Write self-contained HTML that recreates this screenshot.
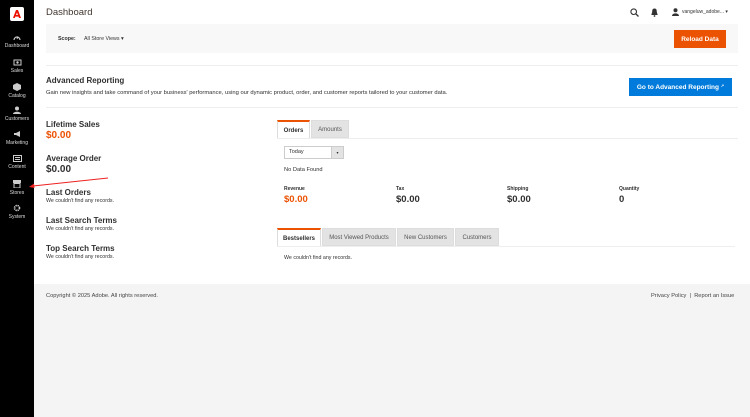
<!DOCTYPE html>
<html><head><meta charset="utf-8"><style>
*{margin:0;padding:0;box-sizing:border-box}
body{width:750px;height:417px;overflow:hidden;background:#fff;font-family:"Liberation Sans",sans-serif;color:#303030;position:relative}
.a{position:absolute;white-space:nowrap}
#side{left:0;top:0;width:34px;height:417px;background:#000}
.nav{width:34px;text-align:center;color:#ddd;font-size:5px}
.nav svg{display:block;margin:0 auto 2px}
.h{font-weight:bold;font-size:8px;color:#303030}
.s{font-size:5.3px;color:#303030}
.tab{position:absolute;height:18px;font-size:6px;line-height:18px;text-align:center;background:#e3e3e3;border:1px solid #ddd;color:#555}
.tab.on{background:#fff;border-top:2px solid #eb5202;border-bottom:none;font-weight:bold;color:#303030}
.btn{position:absolute;color:#fff;font-size:6.5px;font-weight:bold;display:flex;align-items:center;justify-content:center}
</style></head><body>
<div class="a" id="side"></div>
<div class="a" style="left:10px;top:7px;width:14px;height:14px;background:#fff;border-radius:2px"></div>
<svg class="a" style="left:12px;top:9px" width="10" height="10" viewBox="0 0 10 10"><path d="M1 9L4 1h2l3 8H7L5 3.5 4 6h2l.7 1.6H3.3L2.8 9z" fill="#eb1000"/></svg>
<div class="a nav" style="top:34px"><svg width="8" height="7" viewBox="0 0 8 7"><path d="M1 6A3 3 0 1 1 7 6" stroke="#ccc" fill="none" stroke-width="1.2"/><path d="M4 5L5 2.5" stroke="#ccc"/></svg>Dashboard</div>
<div class="a nav" style="top:59px"><svg width="9" height="7" viewBox="0 0 9 7"><rect x="1" y="1" width="7" height="5" fill="none" stroke="#ccc"/><circle cx="4.5" cy="3.5" r="1.2" fill="#ccc"/></svg>Sales</div>
<div class="a nav" style="top:83px"><svg width="8" height="8" viewBox="0 0 8 8"><path d="M4 0L8 2v4L4 8 0 6V2z" fill="#ccc"/></svg>Catalog</div>
<div class="a nav" style="top:106px"><svg width="9" height="8" viewBox="0 0 9 8"><circle cx="4" cy="2.5" r="2" fill="#ccc"/><path d="M0 8c0-3 8-3 8 0z" fill="#ccc"/></svg>Customers</div>
<div class="a nav" style="top:131px"><svg width="8" height="7" viewBox="0 0 8 7"><path d="M1 2h2l4-2v6L3 4H1z" fill="#ccc"/></svg>Marketing</div>
<div class="a nav" style="top:155px"><svg width="9" height="7" viewBox="0 0 9 7"><rect x="0.5" y="0.5" width="8" height="6" fill="none" stroke="#ccc"/><rect x="2" y="2" width="5" height="1" fill="#ccc"/><rect x="2" y="4" width="5" height="1" fill="#ccc"/></svg>Content</div>
<div class="a nav" style="top:180px"><svg width="8" height="8" viewBox="0 0 8 8"><rect x="0" y="0" width="8" height="3" fill="#ccc"/><rect x="1" y="3.5" width="6" height="4.5" fill="none" stroke="#ccc"/></svg>Stores</div>
<div class="a nav" style="top:204px"><svg width="8" height="8" viewBox="0 0 8 8"><circle cx="4" cy="4" r="2.5" fill="none" stroke="#ccc" stroke-width="1.6" stroke-dasharray="1.3 0.7"/></svg>System</div>
<svg class="a" style="left:28px;top:176px" width="84" height="14" viewBox="0 0 84 14"><path d="M80 2L5 10" stroke="#e22" stroke-width="1"/><path d="M1 11L6 7.5 6.5 12z" fill="#e22"/></svg>

<div class="a" style="left:46px;top:7px;font-size:9.5px;color:#41362f">Dashboard</div>
<svg class="a" style="left:630px;top:8px" width="9" height="9" viewBox="0 0 9 9"><circle cx="3.7" cy="3.7" r="2.8" fill="none" stroke="#333" stroke-width="1.1"/><path d="M5.8 5.8L8.5 8.5" stroke="#333" stroke-width="1.3"/></svg>
<svg class="a" style="left:651px;top:8px" width="7" height="9" viewBox="0 0 7 9"><path d="M3.5 0.5C1.5 0.5 1.2 2 1.2 4L0.3 7h6.4L5.8 4C5.8 2 5.5 0.5 3.5 0.5z" fill="#333"/><circle cx="3.5" cy="8" r="0.9" fill="#333"/></svg>
<svg class="a" style="left:672px;top:8px" width="7" height="8" viewBox="0 0 7 8"><circle cx="3.5" cy="2.2" r="2" fill="#333"/><path d="M0 8c0-3.5 7-3.5 7 0z" fill="#333"/></svg>
<div class="a" style="left:682px;top:9px;font-size:5px;color:#333">vangeluw_adobe... &#9662;</div>

<div class="a" style="left:46px;top:24px;width:692px;height:29px;background:#f8f8f8"></div>
<div class="a" style="left:58px;top:36px;font-size:5.3px;font-weight:bold">Scope:</div>
<div class="a" style="left:84px;top:36px;font-size:5.3px;color:#333">All Store Views &#9662;</div>
<div class="btn" style="left:674px;top:30px;width:52px;height:18px;background:#eb5202">Reload Data</div>
<div class="a" style="left:46px;top:65px;width:692px;height:1px;background:#eee"></div>

<div class="a h" style="left:46px;top:76px">Advanced Reporting</div>
<div class="a s" style="left:46px;top:90px;font-size:5.8px">Gain new insights and take command of your business' performance, using our dynamic product, order, and customer reports tailored to your customer data.</div>
<div class="btn" style="left:629px;top:78px;width:103px;height:18px;background:#007bdb">Go to Advanced Reporting&nbsp;<span style="font-size:4px;position:relative;top:-2px">&#x2197;</span></div>
<div class="a" style="left:46px;top:107px;width:692px;height:1px;background:#eee"></div>

<div class="a h" style="left:46px;top:120px">Lifetime Sales</div>
<div class="a" style="left:46px;top:130px;font-size:10px;font-weight:bold;color:#eb5202">$0.00</div>
<div class="a h" style="left:46px;top:154px">Average Order</div>
<div class="a" style="left:46px;top:164px;font-size:10px;font-weight:bold">$0.00</div>
<div class="a h" style="left:46px;top:188px">Last Orders</div>
<div class="a s" style="left:46px;top:198px">We couldn't find any records.</div>
<div class="a h" style="left:46px;top:216px">Last Search Terms</div>
<div class="a s" style="left:46px;top:226px">We couldn't find any records.</div>
<div class="a h" style="left:46px;top:244px">Top Search Terms</div>
<div class="a s" style="left:46px;top:254px">We couldn't find any records.</div>

<div class="tab on" style="left:277px;top:120px;width:33px">Orders</div>
<div class="tab" style="left:311px;top:120px;width:38px">Amounts</div>
<div class="a" style="left:277px;top:138px;width:461px;height:1px;background:#eee"></div>
<div class="a" style="left:284px;top:146px;width:60px;height:13px;border:1px solid #ccc;font-size:5.5px;line-height:11px;padding-left:4px">Today</div>
<div class="a" style="left:331px;top:146px;width:13px;height:13px;background:#e3e3e3;border:1px solid #ccc;font-size:4px;text-align:center;line-height:11px">&#9662;</div>
<div class="a s" style="left:284px;top:167px;font-size:5.7px">No Data Found</div>
<div class="a" style="left:284px;top:186px;font-size:5px;font-weight:bold">Revenue</div>
<div class="a" style="left:284px;top:194px;font-size:9.5px;font-weight:bold;color:#eb5202">$0.00</div>
<div class="a" style="left:396px;top:186px;font-size:5px;font-weight:bold">Tax</div>
<div class="a" style="left:396px;top:194px;font-size:9.5px;font-weight:bold">$0.00</div>
<div class="a" style="left:507px;top:186px;font-size:5px;font-weight:bold">Shipping</div>
<div class="a" style="left:507px;top:194px;font-size:9.5px;font-weight:bold">$0.00</div>
<div class="a" style="left:619px;top:186px;font-size:5px;font-weight:bold">Quantity</div>
<div class="a" style="left:619px;top:194px;font-size:9.5px;font-weight:bold">0</div>

<div class="tab on" style="left:277px;top:228px;width:44px">Bestsellers</div>
<div class="tab" style="left:322px;top:228px;width:74px">Most Viewed Products</div>
<div class="tab" style="left:397px;top:228px;width:57px">New Customers</div>
<div class="tab" style="left:455px;top:228px;width:44px">Customers</div>
<div class="a" style="left:277px;top:246px;width:458px;height:1px;background:#eee"></div>
<div class="a s" style="left:284px;top:255px">We couldn't find any records.</div>

<div class="a" style="left:34px;top:284px;width:716px;height:133px;background:#f4f4f4"></div>
<div class="a s" style="left:46px;top:293px;font-size:5.7px;color:#444">Copyright © 2025 Adobe. All rights reserved.</div>
<div class="a s" style="left:651px;top:293px;font-size:5.7px;color:#444">Privacy Policy &nbsp;| &nbsp;Report an Issue</div>
</body></html>
